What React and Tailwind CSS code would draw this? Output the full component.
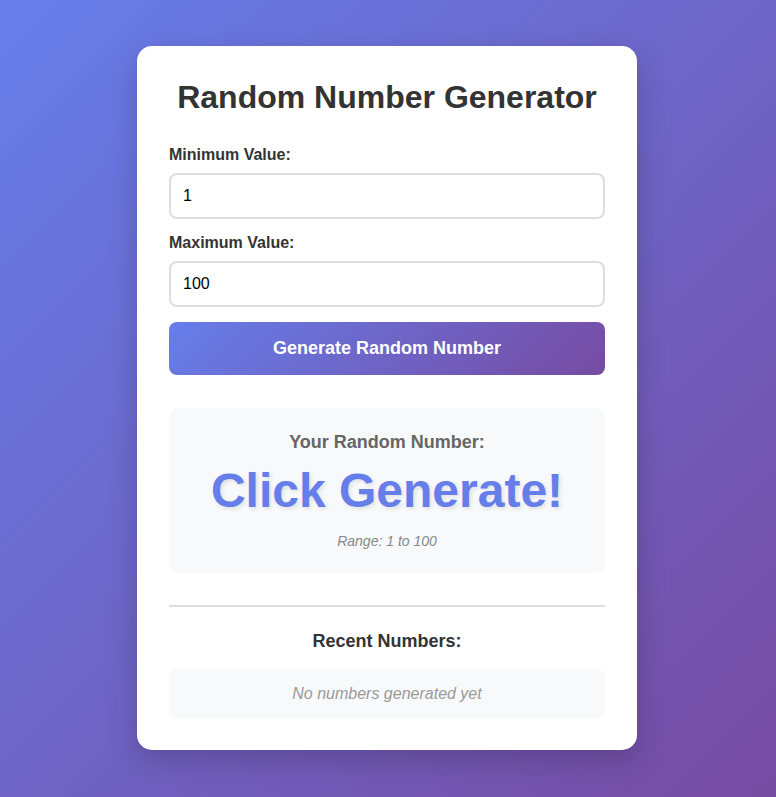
import React, { useState } from 'react';

export default function App() {
  const [min, setMin] = useState('1');
  const [max, setMax] = useState('100');
  const [result, setResult] = useState(null);
  const [history, setHistory] = useState([]);

  const generate = () => {
    const lo = parseInt(min, 10);
    const hi = parseInt(max, 10);
    if (isNaN(lo) || isNaN(hi) || lo > hi) return;
    const n = Math.floor(Math.random() * (hi - lo + 1)) + lo;
    setResult(n);
    setHistory((h) => [n, ...h].slice(0, 10));
  };

  return (
    <div
      className="min-h-screen flex items-center justify-center pr-[2px] pb-[1px] bg-[linear-gradient(135deg,#667eea_0%,#764ba2_100%)] text-[#333]"
      style={{ fontFamily: '"Liberation Sans", Arial, sans-serif' }}
    >
      <div className="w-[500px] bg-white rounded-[15px] p-8 shadow-[0_10px_30px_rgba(0,0,0,0.2)]">
        <h1 className="text-[32px] leading-[38px] font-bold text-center text-[#333] mb-[30px]">
          Random Number Generator
        </h1>

        {/* Inputs */}
        <div className="mb-[15px]">
          <label className="block text-base leading-[18px] font-bold text-[#333] mb-[9px]">Minimum Value:</label>
          <input
            type="number"
            value={min}
            onChange={(e) => setMin(e.target.value)}
            className="block w-full h-[46px] px-3 text-base text-black border-2 border-[#ddd] rounded-lg outline-none"
          />
        </div>
        <div className="mb-[15px]">
          <label className="block text-base leading-[18px] font-bold text-[#333] mb-[9px]">Maximum Value:</label>
          <input
            type="number"
            value={max}
            onChange={(e) => setMax(e.target.value)}
            className="block w-full h-[46px] px-3 text-base text-black border-2 border-[#ddd] rounded-lg outline-none"
          />
        </div>

        <button
          onClick={generate}
          className="w-full py-4 rounded-lg text-white text-lg leading-[21px] font-bold bg-[linear-gradient(135deg,#667eea_0%,#764ba2_100%)]"
        >
          Generate Random Number
        </button>

        {/* Result */}
        <div className="mt-[33px] bg-[#f8f9fa] rounded-[10px] p-6 text-center">
          <h3 className="text-lg leading-[21px] font-bold text-[#666] mb-[10px]">Your Random Number:</h3>
          <div className="text-5xl leading-[55px] font-bold text-[#667eea] mb-[15px] [text-shadow:2px_2px_4px_rgba(0,0,0,0.1)]">
            {result === null ? 'Click Generate!' : result}
          </div>
          <div className="text-sm leading-4 italic text-[#888]">
            Range: {min} to {max}
          </div>
        </div>

        {/* History */}
        <div className="mt-8 border-t-2 border-[#ddd] pt-6">
          <h3 className="text-lg leading-[21px] font-bold text-[#333] text-center mb-[17px]">Recent Numbers:</h3>
          <div className="bg-[#f8f9fa] rounded-lg p-[15px] text-center leading-[19px]">
            {history.length === 0 ? (
              <span className="italic text-[#999] text-base leading-[19px]">No numbers generated yet</span>
            ) : (
              <div className="flex flex-wrap justify-center gap-2">
                {history.map((n, i) => (
                  <span key={i} className="px-3 py-1 rounded-full bg-[#667eea] text-white text-sm font-bold">
                    {n}
                  </span>
                ))}
              </div>
            )}
          </div>
        </div>
      </div>
    </div>
  );
}
